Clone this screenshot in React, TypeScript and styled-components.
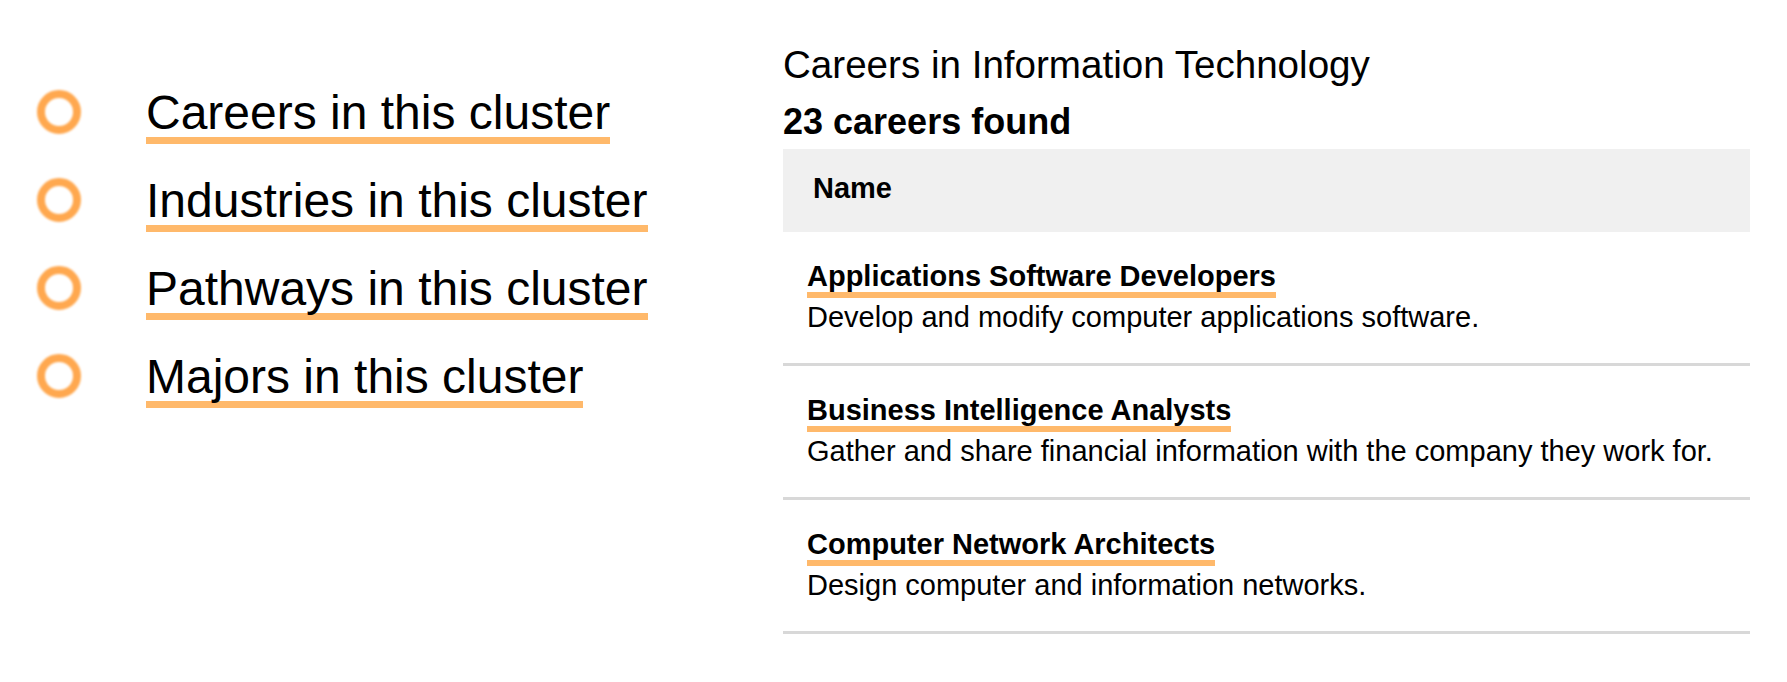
import React from 'react';
import styled, { createGlobalStyle } from 'styled-components';

const GlobalStyle = createGlobalStyle`
  html, body {
    margin: 0;
    padding: 0;
    background: #ffffff;
  }
  body {
    font-family: "Liberation Sans", Arial, sans-serif;
    color: #000000;
  }
`;

const Page = styled.div`
  display: flex;
  width: 1787px;
  min-height: 682px;
`;

const Sidebar = styled.nav`
  width: 783px;
  padding: 89px 0 0 37px;
  box-sizing: border-box;
`;

const LinkList = styled.ul`
  list-style: none;
  margin: 0;
  padding: 0;
  display: flex;
  flex-direction: column;
  gap: 33px;
`;

const LinkItem = styled.li`
  display: flex;
  align-items: flex-start;
  gap: 65px;
`;

const Ring = styled.span`
  flex: none;
  width: 44px;
  height: 44px;
  margin-top: 1px;
  box-sizing: border-box;
  border: 8px solid #ffa84f;
  border-radius: 50%;
  filter: blur(1px);
`;

const ClusterLink = styled.a`
  display: inline-block;
  font-size: 48px;
  line-height: 48px;
  color: #000000;
  text-decoration: none;
  border-bottom: 7px solid #ffb96b;
  cursor: pointer;
`;

const Main = styled.main`
  width: 967px;
  padding-top: 43px;
`;

const Heading = styled.h1`
  margin: 0;
  font-size: 38.6px;
  line-height: 44px;
  font-weight: 400;
`;

const Count = styled.h2`
  margin: 15px 0 0;
  font-size: 36px;
  line-height: 40px;
  font-weight: 700;
`;

const Table = styled.div`
  margin-top: 7px;
`;

const HeaderRow = styled.div`
  height: 83px;
  box-sizing: border-box;
  padding: 23px 30px 0;
  background: #f0f0f0;
  font-size: 29px;
  line-height: 33px;
  font-weight: 700;
`;

const CareerRow = styled.div`
  padding: 28px 24px 29px;
  border-bottom: 3px solid #d8d8d8;
  display: flex;
  flex-direction: column;
  align-items: flex-start;
`;

const CareerTitle = styled.a`
  display: inline-block;
  font-size: 29px;
  line-height: 32px;
  font-weight: 700;
  color: #000000;
  text-decoration: none;
  border-bottom: 6px solid #ffb96b;
  cursor: pointer;
`;

const CareerText = styled.p`
  margin: 3px 0 0;
  font-size: 29px;
  line-height: 33px;
`;

const links = [
  'Careers in this cluster',
  'Industries in this cluster',
  'Pathways in this cluster',
  'Majors in this cluster',
];

const careers = [
  {
    title: 'Applications Software Developers',
    text: 'Develop and modify computer applications software.',
  },
  {
    title: 'Business Intelligence Analysts',
    text: 'Gather and share financial information with the company they work for.',
  },
  {
    title: 'Computer Network Architects',
    text: 'Design computer and information networks.',
  },
];

export default function App() {
  return (
    <>
      <GlobalStyle />
      <Page>
        <Sidebar>
          <LinkList>
            {links.map(label => (
              <LinkItem key={label}>
                <Ring />
                <ClusterLink>{label}</ClusterLink>
              </LinkItem>
            ))}
          </LinkList>
        </Sidebar>
        <Main>
          <Heading>Careers in Information Technology</Heading>
          <Count>23 careers found</Count>
          <Table>
            <HeaderRow>Name</HeaderRow>
            {careers.map(c => (
              <CareerRow key={c.title}>
                <CareerTitle>{c.title}</CareerTitle>
                <CareerText>{c.text}</CareerText>
              </CareerRow>
            ))}
          </Table>
        </Main>
      </Page>
    </>
  );
}
